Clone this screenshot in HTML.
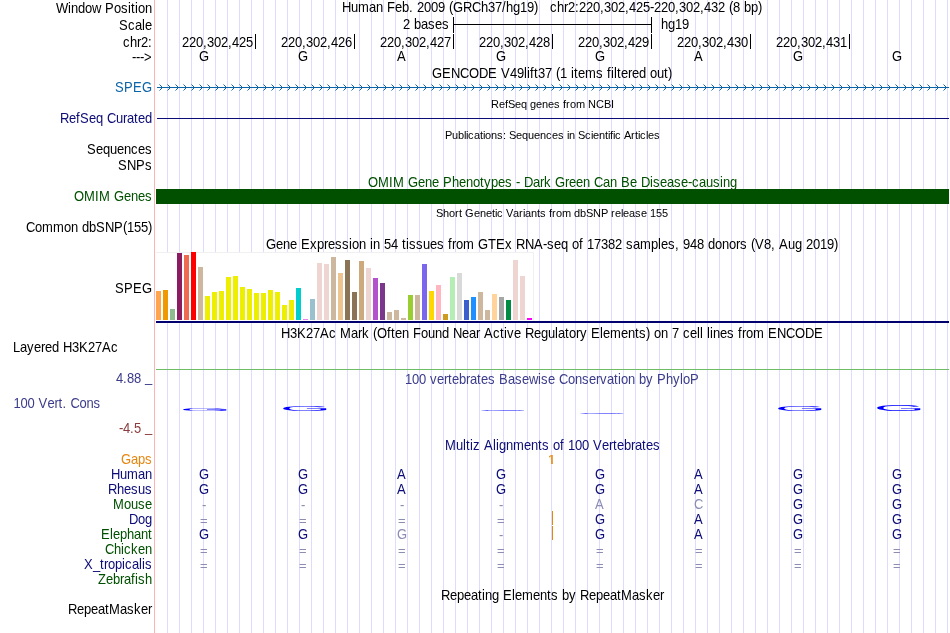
<!DOCTYPE html>
<html lang="en"><head><meta charset="utf-8"><title>UCSC Genome Browser - hg19 chr2:220,302,425-220,302,432</title>
<style>
html,body{margin:0;padding:0;background:#fff;}
body{width:950px;height:633px;overflow:hidden;}
svg{display:block;will-change:transform;font-family:"Liberation Sans",sans-serif;font-size:13.8px;}
svg text{white-space:pre;}
svg text.s{font-size:11.1px;}
svg rect{shape-rendering:crispEdges;}
</style></head><body>
<svg width="950" height="633" viewBox="0 0 950 633">
<g fill="#dcdcff">
<rect x="167" y="0" width="1" height="633"/>
<rect x="179" y="0" width="1" height="633"/>
<rect x="191" y="0" width="1" height="633"/>
<rect x="203" y="0" width="1" height="633"/>
<rect x="215" y="0" width="1" height="633"/>
<rect x="227" y="0" width="1" height="633"/>
<rect x="239" y="0" width="1" height="633"/>
<rect x="251" y="0" width="1" height="633"/>
<rect x="263" y="0" width="1" height="633"/>
<rect x="275" y="0" width="1" height="633"/>
<rect x="287" y="0" width="1" height="633"/>
<rect x="299" y="0" width="1" height="633"/>
<rect x="311" y="0" width="1" height="633"/>
<rect x="323" y="0" width="1" height="633"/>
<rect x="335" y="0" width="1" height="633"/>
<rect x="347" y="0" width="1" height="633"/>
<rect x="359" y="0" width="1" height="633"/>
<rect x="371" y="0" width="1" height="633"/>
<rect x="383" y="0" width="1" height="633"/>
<rect x="395" y="0" width="1" height="633"/>
<rect x="407" y="0" width="1" height="633"/>
<rect x="419" y="0" width="1" height="633"/>
<rect x="431" y="0" width="1" height="633"/>
<rect x="443" y="0" width="1" height="633"/>
<rect x="455" y="0" width="1" height="633"/>
<rect x="467" y="0" width="1" height="633"/>
<rect x="479" y="0" width="1" height="633"/>
<rect x="491" y="0" width="1" height="633"/>
<rect x="503" y="0" width="1" height="633"/>
<rect x="515" y="0" width="1" height="633"/>
<rect x="527" y="0" width="1" height="633"/>
<rect x="539" y="0" width="1" height="633"/>
<rect x="551" y="0" width="1" height="633"/>
<rect x="563" y="0" width="1" height="633"/>
<rect x="575" y="0" width="1" height="633"/>
<rect x="587" y="0" width="1" height="633"/>
<rect x="599" y="0" width="1" height="633"/>
<rect x="611" y="0" width="1" height="633"/>
<rect x="623" y="0" width="1" height="633"/>
<rect x="635" y="0" width="1" height="633"/>
<rect x="647" y="0" width="1" height="633"/>
<rect x="659" y="0" width="1" height="633"/>
<rect x="671" y="0" width="1" height="633"/>
<rect x="683" y="0" width="1" height="633"/>
<rect x="695" y="0" width="1" height="633"/>
<rect x="707" y="0" width="1" height="633"/>
<rect x="719" y="0" width="1" height="633"/>
<rect x="731" y="0" width="1" height="633"/>
<rect x="743" y="0" width="1" height="633"/>
<rect x="755" y="0" width="1" height="633"/>
<rect x="767" y="0" width="1" height="633"/>
<rect x="779" y="0" width="1" height="633"/>
<rect x="791" y="0" width="1" height="633"/>
<rect x="803" y="0" width="1" height="633"/>
<rect x="815" y="0" width="1" height="633"/>
<rect x="827" y="0" width="1" height="633"/>
<rect x="839" y="0" width="1" height="633"/>
<rect x="851" y="0" width="1" height="633"/>
<rect x="863" y="0" width="1" height="633"/>
<rect x="875" y="0" width="1" height="633"/>
<rect x="887" y="0" width="1" height="633"/>
<rect x="899" y="0" width="1" height="633"/>
<rect x="911" y="0" width="1" height="633"/>
<rect x="923" y="0" width="1" height="633"/>
<rect x="935" y="0" width="1" height="633"/>
<rect x="947" y="0" width="1" height="633"/>
</g>
<rect x="154" y="0" width="1" height="633" fill="#ffb4b4"/>
<text transform="translate(0 13) scale(0.94203 1)" x="59.45 72.18 75.37 82.8 90.23 97.66 107.22 111.46 121.02 128.45 135.88 139.06 143.31 146.49 153.92" y="0" fill="#000">Window Position</text>
<text transform="translate(0 12) scale(0.94203 1)" x="363.05 372.6 380.03 391.71 399.14 406.57 410.82 419.31 426.74 434.17 438.42 442.66 450.09 457.52 464.95 472.38 476.63 480.88 491.49 501.05 510.6 518.03 525.46 532.89 537.14 544.57 552 559.43 566.86 571.11 575.35 579.6 583.85 591.28 598.71 602.95 610.38 614.63 622.06 629.49 636.92 641.17 648.6 656.03 663.46 667.71 675.14 682.57 690 694.25 701.68 709.11 716.54 720.78 728.22 735.65 743.08 747.32 754.75 762.18 769.62 773.86 778.11 785.54 789.78 797.22 804.65" y="0" xml:space="preserve" fill="#000">Human Feb. 2009 (GRCh37/hg19)   chr2:220,302,425-220,302,432 (8 bp)</text>
<text transform="translate(0 30) scale(0.94203 1)" x="126.32 135.88 143.31 150.74 153.92" y="0" fill="#000">Scale</text>
<text transform="translate(0 29) scale(0.94203 1)" x="427.8 435.23 439.48 446.91 454.34 461.77 469.2" y="0" fill="#000">2 bases</text>
<rect x="453" y="24" width="199" height="1" fill="#000"/>
<rect x="453" y="17" width="1" height="16" fill="#000"/>
<rect x="651" y="17" width="1" height="16" fill="#000"/>
<text transform="translate(0 29) scale(0.94203 1)" x="701.68 709.11 716.54 723.97" y="0" fill="#000">hg19</text>
<text transform="translate(0 47) scale(0.94203 1)" x="130.57 138 145.43 149.68 157.11" y="0" fill="#000">chr2:</text>
<rect x="255" y="34" width="1" height="15" fill="#000"/>
<text transform="translate(0 47) scale(0.94203 1)" x="193.2 200.63 208.06 215.49 219.74 227.17 234.6 242.03 246.28 253.71 261.14" y="0" fill="#000">220,302,425</text>
<rect x="354" y="34" width="1" height="15" fill="#000"/>
<text transform="translate(0 47) scale(0.94203 1)" x="298.29 305.72 313.15 320.58 324.83 332.26 339.69 347.12 351.37 358.8 366.23" y="0" fill="#000">220,302,426</text>
<rect x="453" y="34" width="1" height="15" fill="#000"/>
<text transform="translate(0 47) scale(0.94203 1)" x="403.38 410.82 418.25 425.68 429.92 437.35 444.78 452.22 456.46 463.89 471.32" y="0" fill="#000">220,302,427</text>
<rect x="552" y="34" width="1" height="15" fill="#000"/>
<text transform="translate(0 47) scale(0.94203 1)" x="508.48 515.91 523.34 530.77 535.02 542.45 549.88 557.31 561.55 568.98 576.42" y="0" fill="#000">220,302,428</text>
<rect x="651" y="34" width="1" height="15" fill="#000"/>
<text transform="translate(0 47) scale(0.94203 1)" x="613.57 621 628.43 635.86 640.11 647.54 654.97 662.4 666.65 674.08 681.51" y="0" fill="#000">220,302,429</text>
<rect x="750" y="34" width="1" height="15" fill="#000"/>
<text transform="translate(0 47) scale(0.94203 1)" x="718.66 726.09 733.52 740.95 745.2 752.63 760.06 767.49 771.74 779.17 786.6" y="0" fill="#000">220,302,430</text>
<rect x="849" y="34" width="1" height="15" fill="#000"/>
<text transform="translate(0 47) scale(0.94203 1)" x="823.75 831.18 838.62 846.05 850.29 857.72 865.15 872.58 876.83 884.26 891.69" y="0" fill="#000">220,302,431</text>
<text transform="translate(0 62) scale(0.94203 1)" x="140.12 144.37 148.62 152.86" y="0" fill="#000">---&gt;</text>
<text transform="translate(0 61) scale(0.94203 1)" x="211.25" y="0" fill="#000">G</text>
<text transform="translate(0 61) scale(0.94203 1)" x="316.34" y="0" fill="#000">G</text>
<text transform="translate(0 61) scale(0.94203 1)" x="421.43" y="0" fill="#000">A</text>
<text transform="translate(0 61) scale(0.94203 1)" x="526.52" y="0" fill="#000">G</text>
<text transform="translate(0 61) scale(0.94203 1)" x="631.62" y="0" fill="#000">G</text>
<text transform="translate(0 61) scale(0.94203 1)" x="736.71" y="0" fill="#000">A</text>
<text transform="translate(0 61) scale(0.94203 1)" x="841.8" y="0" fill="#000">G</text>
<text transform="translate(0 61) scale(0.94203 1)" x="946.89" y="0" fill="#000">G</text>
<text transform="translate(0 78) scale(0.94203 1)" x="458.58 469.2 478.75 488.31 497.86 508.48 518.03 527.58 531.83 541.38 548.82 556.25 559.43 562.62 566.86 571.11 578.54 585.97 590.22 594.46 601.89 606.14 609.32 613.57 621 632.68 640.11 644.35 648.6 651.78 654.97 659.22 666.65 670.89 678.32 685.75 690 697.43 704.86 709.11" y="0" fill="#000">GENCODE V49lift37 (1 items filtered out)</text>
<text transform="translate(0 92) scale(0.94203 1)" x="122.08 131.63 141.18 150.74" y="0" fill="#0c64a8">SPEG</text>
<rect x="157" y="87" width="792" height="1" fill="#0c64a8"/>
<g stroke="#0c64a8" stroke-width="1" fill="none">
<path d="M159.5 84.5 L162.5 87.5 L159.5 90.5"/>
<path d="M167.5 84.5 L170.5 87.5 L167.5 90.5"/>
<path d="M175.5 84.5 L178.5 87.5 L175.5 90.5"/>
<path d="M183.5 84.5 L186.5 87.5 L183.5 90.5"/>
<path d="M191.5 84.5 L194.5 87.5 L191.5 90.5"/>
<path d="M199.5 84.5 L202.5 87.5 L199.5 90.5"/>
<path d="M207.5 84.5 L210.5 87.5 L207.5 90.5"/>
<path d="M215.5 84.5 L218.5 87.5 L215.5 90.5"/>
<path d="M223.5 84.5 L226.5 87.5 L223.5 90.5"/>
<path d="M231.5 84.5 L234.5 87.5 L231.5 90.5"/>
<path d="M239.5 84.5 L242.5 87.5 L239.5 90.5"/>
<path d="M247.5 84.5 L250.5 87.5 L247.5 90.5"/>
<path d="M255.5 84.5 L258.5 87.5 L255.5 90.5"/>
<path d="M263.5 84.5 L266.5 87.5 L263.5 90.5"/>
<path d="M271.5 84.5 L274.5 87.5 L271.5 90.5"/>
<path d="M279.5 84.5 L282.5 87.5 L279.5 90.5"/>
<path d="M287.5 84.5 L290.5 87.5 L287.5 90.5"/>
<path d="M295.5 84.5 L298.5 87.5 L295.5 90.5"/>
<path d="M303.5 84.5 L306.5 87.5 L303.5 90.5"/>
<path d="M311.5 84.5 L314.5 87.5 L311.5 90.5"/>
<path d="M319.5 84.5 L322.5 87.5 L319.5 90.5"/>
<path d="M327.5 84.5 L330.5 87.5 L327.5 90.5"/>
<path d="M335.5 84.5 L338.5 87.5 L335.5 90.5"/>
<path d="M343.5 84.5 L346.5 87.5 L343.5 90.5"/>
<path d="M351.5 84.5 L354.5 87.5 L351.5 90.5"/>
<path d="M359.5 84.5 L362.5 87.5 L359.5 90.5"/>
<path d="M367.5 84.5 L370.5 87.5 L367.5 90.5"/>
<path d="M375.5 84.5 L378.5 87.5 L375.5 90.5"/>
<path d="M383.5 84.5 L386.5 87.5 L383.5 90.5"/>
<path d="M391.5 84.5 L394.5 87.5 L391.5 90.5"/>
<path d="M399.5 84.5 L402.5 87.5 L399.5 90.5"/>
<path d="M407.5 84.5 L410.5 87.5 L407.5 90.5"/>
<path d="M415.5 84.5 L418.5 87.5 L415.5 90.5"/>
<path d="M423.5 84.5 L426.5 87.5 L423.5 90.5"/>
<path d="M431.5 84.5 L434.5 87.5 L431.5 90.5"/>
<path d="M439.5 84.5 L442.5 87.5 L439.5 90.5"/>
<path d="M447.5 84.5 L450.5 87.5 L447.5 90.5"/>
<path d="M455.5 84.5 L458.5 87.5 L455.5 90.5"/>
<path d="M463.5 84.5 L466.5 87.5 L463.5 90.5"/>
<path d="M471.5 84.5 L474.5 87.5 L471.5 90.5"/>
<path d="M479.5 84.5 L482.5 87.5 L479.5 90.5"/>
<path d="M487.5 84.5 L490.5 87.5 L487.5 90.5"/>
<path d="M495.5 84.5 L498.5 87.5 L495.5 90.5"/>
<path d="M503.5 84.5 L506.5 87.5 L503.5 90.5"/>
<path d="M511.5 84.5 L514.5 87.5 L511.5 90.5"/>
<path d="M519.5 84.5 L522.5 87.5 L519.5 90.5"/>
<path d="M527.5 84.5 L530.5 87.5 L527.5 90.5"/>
<path d="M535.5 84.5 L538.5 87.5 L535.5 90.5"/>
<path d="M543.5 84.5 L546.5 87.5 L543.5 90.5"/>
<path d="M551.5 84.5 L554.5 87.5 L551.5 90.5"/>
<path d="M559.5 84.5 L562.5 87.5 L559.5 90.5"/>
<path d="M567.5 84.5 L570.5 87.5 L567.5 90.5"/>
<path d="M575.5 84.5 L578.5 87.5 L575.5 90.5"/>
<path d="M583.5 84.5 L586.5 87.5 L583.5 90.5"/>
<path d="M591.5 84.5 L594.5 87.5 L591.5 90.5"/>
<path d="M599.5 84.5 L602.5 87.5 L599.5 90.5"/>
<path d="M607.5 84.5 L610.5 87.5 L607.5 90.5"/>
<path d="M615.5 84.5 L618.5 87.5 L615.5 90.5"/>
<path d="M623.5 84.5 L626.5 87.5 L623.5 90.5"/>
<path d="M631.5 84.5 L634.5 87.5 L631.5 90.5"/>
<path d="M639.5 84.5 L642.5 87.5 L639.5 90.5"/>
<path d="M647.5 84.5 L650.5 87.5 L647.5 90.5"/>
<path d="M655.5 84.5 L658.5 87.5 L655.5 90.5"/>
<path d="M663.5 84.5 L666.5 87.5 L663.5 90.5"/>
<path d="M671.5 84.5 L674.5 87.5 L671.5 90.5"/>
<path d="M679.5 84.5 L682.5 87.5 L679.5 90.5"/>
<path d="M687.5 84.5 L690.5 87.5 L687.5 90.5"/>
<path d="M695.5 84.5 L698.5 87.5 L695.5 90.5"/>
<path d="M703.5 84.5 L706.5 87.5 L703.5 90.5"/>
<path d="M711.5 84.5 L714.5 87.5 L711.5 90.5"/>
<path d="M719.5 84.5 L722.5 87.5 L719.5 90.5"/>
<path d="M727.5 84.5 L730.5 87.5 L727.5 90.5"/>
<path d="M735.5 84.5 L738.5 87.5 L735.5 90.5"/>
<path d="M743.5 84.5 L746.5 87.5 L743.5 90.5"/>
<path d="M751.5 84.5 L754.5 87.5 L751.5 90.5"/>
<path d="M759.5 84.5 L762.5 87.5 L759.5 90.5"/>
<path d="M767.5 84.5 L770.5 87.5 L767.5 90.5"/>
<path d="M775.5 84.5 L778.5 87.5 L775.5 90.5"/>
<path d="M783.5 84.5 L786.5 87.5 L783.5 90.5"/>
<path d="M791.5 84.5 L794.5 87.5 L791.5 90.5"/>
<path d="M799.5 84.5 L802.5 87.5 L799.5 90.5"/>
<path d="M807.5 84.5 L810.5 87.5 L807.5 90.5"/>
<path d="M815.5 84.5 L818.5 87.5 L815.5 90.5"/>
<path d="M823.5 84.5 L826.5 87.5 L823.5 90.5"/>
<path d="M831.5 84.5 L834.5 87.5 L831.5 90.5"/>
<path d="M839.5 84.5 L842.5 87.5 L839.5 90.5"/>
<path d="M847.5 84.5 L850.5 87.5 L847.5 90.5"/>
<path d="M855.5 84.5 L858.5 87.5 L855.5 90.5"/>
<path d="M863.5 84.5 L866.5 87.5 L863.5 90.5"/>
<path d="M871.5 84.5 L874.5 87.5 L871.5 90.5"/>
<path d="M879.5 84.5 L882.5 87.5 L879.5 90.5"/>
<path d="M887.5 84.5 L890.5 87.5 L887.5 90.5"/>
<path d="M895.5 84.5 L898.5 87.5 L895.5 90.5"/>
<path d="M903.5 84.5 L906.5 87.5 L903.5 90.5"/>
<path d="M911.5 84.5 L914.5 87.5 L911.5 90.5"/>
<path d="M919.5 84.5 L922.5 87.5 L919.5 90.5"/>
<path d="M927.5 84.5 L930.5 87.5 L927.5 90.5"/>
<path d="M935.5 84.5 L938.5 87.5 L935.5 90.5"/>
<path d="M943.5 84.5 L946.5 87.5 L943.5 90.5"/>
</g>
<text transform="translate(0 108) scale(0.99099 1)" x="495.46 503.54 509.59 512.62 519.68 525.74 531.79 534.82 540.87 546.93 552.98 559.04 565.09 568.12 571.15 575.18 581.24 590.32 593.35 601.42 609.49 616.55" y="0" class="s" fill="#000">RefSeq genes from NCBI</text>
<text transform="translate(0 123) scale(0.94203 1)" x="63.69 73.25 80.68 84.92 94.48 101.91 109.34 113.58 123.14 130.57 134.82 142.25 146.49 153.92" y="0" fill="#0c0c78">RefSeq Curated</text>
<rect x="157" y="118" width="792" height="1" fill="#0c0c78"/>
<text transform="translate(0 139) scale(0.99099 1)" x="449.05 456.11 462.16 468.22 470.24 472.25 478.31 484.36 487.39 489.41 495.46 501.52 507.57 510.6 513.63 520.69 526.75 532.8 538.85 544.91 550.96 557.02 563.07 569.13 572.15 574.17 580.23 583.25 590.32 596.37 598.39 604.45 610.5 613.53 615.55 618.57 620.59 626.65 629.67 636.74 640.77 643.8 645.82 651.87 653.89 659.95" y="0" class="s" fill="#000">Publications: Sequences in Scientific Articles</text>
<text transform="translate(0 154) scale(0.94203 1)" x="92.35 101.91 109.34 116.77 124.2 131.63 139.06 146.49 153.92" y="0" fill="#000">Sequences</text>
<text transform="translate(0 170) scale(0.94203 1)" x="125.26 134.82 144.37 153.92" y="0" fill="#000">SNPs</text>
<text transform="translate(0 187) scale(0.94203 1)" x="390.65 401.26 412.94 417.18 428.86 433.11 443.72 451.15 458.58 466.02 470.26 479.82 487.25 494.68 502.11 509.54 513.78 521.22 528.65 536.08 543.51 547.75 552 556.25 565.8 573.23 577.48 584.91 589.15 599.77 604.02 611.45 618.88 626.31 630.55 640.11 647.54 654.97 659.22 668.77 676.2 680.45 690 693.18 700.62 708.05 715.48 722.91 730.34 734.58 742.02 749.45 756.88 764.31 767.49 774.92" y="0" fill="#005000">OMIM Gene Phenotypes - Dark Green Can Be Disease-causing</text>
<text transform="translate(0 201) scale(0.94203 1)" x="78.55 89.17 100.85 105.09 116.77 121.02 131.63 139.06 146.49 153.92" y="0" fill="#005000">OMIM Genes</text>
<rect x="156" y="189" width="793" height="15" fill="#005000"/>
<text transform="translate(0 217) scale(0.99099 1)" x="439.96 447.03 453.08 459.14 463.17 466.2 469.23 478.31 484.36 490.42 496.47 499.5 501.52 507.57 510.6 517.66 523.72 527.75 529.77 535.83 541.88 544.91 550.96 553.99 557.02 561.05 567.11 576.19 579.22 585.27 591.33 598.39 606.46 613.53 616.55 620.59 626.65 628.66 634.72 640.77 646.83 652.88 655.91 661.96 668.02" y="0" class="s" fill="#000">Short Genetic Variants from dbSNP release 155</text>
<text transform="translate(0 232) scale(0.94203 1)" x="27.6 37.15 44.58 56.26 67.94 75.37 82.8 87.05 94.48 101.91 111.46 121.02 130.57 134.82 142.25 149.68 157.11" y="0" fill="#000">Common dbSNP(155)</text>
<text transform="translate(0 249) scale(0.94203 1)" x="282.37 292.98 300.42 307.85 315.28 319.52 329.08 336.51 343.94 348.18 355.62 363.05 370.48 373.66 381.09 388.52 392.77 395.95 403.38 407.63 415.06 422.49 426.74 430.98 434.17 441.6 449.03 456.46 463.89 471.32 475.57 479.82 484.06 491.49 503.17 507.42 518.03 526.52 536.08 543.51 547.75 557.31 566.86 576.42 580.66 588.09 595.52 602.95 607.2 614.63 618.88 623.12 630.55 637.98 645.42 652.85 660.28 664.52 671.95 679.38 691.06 698.49 701.68 709.11 716.54 720.78 725.03 732.46 739.89 747.32 751.57 759 766.43 773.86 781.29 785.54 792.97 797.22 801.46 811.02 818.45 822.69 826.94 836.49 843.92 851.35 855.6 863.03 870.46 877.89 885.32" y="0" fill="#000">Gene Expression in 54 tissues from GTEx RNA-seq of 17382 samples, 948 donors (V8, Aug 2019)</text>
<text transform="translate(0 293) scale(0.94203 1)" x="122.08 131.63 141.18 150.74" y="0" fill="#000">SPEG</text>
<rect x="156" y="252" width="378" height="69" fill="#fff"/>
<rect x="156" y="252" width="378" height="1" fill="#f0f0f0"/>
<rect x="533" y="252" width="1" height="69" fill="#f0f0f0"/>
<rect x="156" y="291" width="5" height="29" fill="#ffa54f"/>
<rect x="163" y="290" width="5" height="30" fill="#ee9a00"/>
<rect x="170" y="309" width="5" height="11" fill="#8fbc8f"/>
<rect x="177" y="253" width="5" height="67" fill="#8b1c62"/>
<rect x="184" y="255" width="5" height="65" fill="#ee6a50"/>
<rect x="191" y="252" width="5" height="68" fill="#ff0000"/>
<rect x="198" y="267" width="5" height="53" fill="#cdb79e"/>
<rect x="205" y="296" width="5" height="24" fill="#eeee00"/>
<rect x="212" y="292" width="5" height="28" fill="#eeee00"/>
<rect x="219" y="291" width="5" height="29" fill="#eeee00"/>
<rect x="226" y="277" width="5" height="43" fill="#eeee00"/>
<rect x="233" y="276" width="5" height="44" fill="#eeee00"/>
<rect x="240" y="287" width="5" height="33" fill="#eeee00"/>
<rect x="247" y="289" width="5" height="31" fill="#eeee00"/>
<rect x="254" y="293" width="5" height="27" fill="#eeee00"/>
<rect x="261" y="293" width="5" height="27" fill="#eeee00"/>
<rect x="268" y="290" width="5" height="30" fill="#eeee00"/>
<rect x="275" y="292" width="5" height="28" fill="#eeee00"/>
<rect x="282" y="305" width="5" height="15" fill="#eeee00"/>
<rect x="289" y="300" width="5" height="20" fill="#eeee00"/>
<rect x="296" y="288" width="5" height="32" fill="#00cdcd"/>
<rect x="303" y="319" width="5" height="1" fill="#ee82ee"/>
<rect x="310" y="299" width="5" height="21" fill="#9ac0cd"/>
<rect x="317" y="263" width="5" height="57" fill="#eed5d2"/>
<rect x="324" y="264" width="5" height="56" fill="#eed5d2"/>
<rect x="331" y="257" width="5" height="63" fill="#cdb79e"/>
<rect x="338" y="273" width="5" height="47" fill="#eec591"/>
<rect x="345" y="260" width="5" height="60" fill="#8b7355"/>
<rect x="352" y="292" width="5" height="28" fill="#8b7355"/>
<rect x="359" y="261" width="5" height="59" fill="#cdaa7d"/>
<rect x="366" y="268" width="5" height="52" fill="#eed5d2"/>
<rect x="373" y="278" width="5" height="42" fill="#b452cd"/>
<rect x="380" y="283" width="5" height="37" fill="#7a378b"/>
<rect x="387" y="312" width="5" height="8" fill="#cdb79e"/>
<rect x="394" y="310" width="5" height="10" fill="#cdb79e"/>
<rect x="401" y="318" width="5" height="2" fill="#cdb79e"/>
<rect x="408" y="295" width="5" height="25" fill="#9acd32"/>
<rect x="415" y="295" width="5" height="25" fill="#cdb79e"/>
<rect x="422" y="264" width="5" height="56" fill="#7a67ee"/>
<rect x="429" y="291" width="5" height="29" fill="#ffd700"/>
<rect x="436" y="285" width="5" height="35" fill="#ffb6c1"/>
<rect x="443" y="314" width="5" height="6" fill="#cd9b1d"/>
<rect x="450" y="277" width="5" height="43" fill="#b4eeb4"/>
<rect x="457" y="273" width="5" height="47" fill="#d9d9d9"/>
<rect x="464" y="300" width="5" height="20" fill="#3a5fcd"/>
<rect x="471" y="297" width="5" height="23" fill="#1e90ff"/>
<rect x="478" y="292" width="5" height="28" fill="#cdb79e"/>
<rect x="485" y="310" width="5" height="10" fill="#cdb79e"/>
<rect x="492" y="294" width="5" height="26" fill="#ffd39b"/>
<rect x="499" y="297" width="5" height="23" fill="#a6a6a6"/>
<rect x="506" y="300" width="5" height="20" fill="#008b45"/>
<rect x="513" y="260" width="5" height="60" fill="#eed5d2"/>
<rect x="520" y="276" width="5" height="44" fill="#eed5d2"/>
<rect x="527" y="318" width="5" height="2" fill="#ff00ff"/>
<rect x="156" y="321" width="793" height="2" fill="#00006e"/>
<text transform="translate(0 338) scale(0.94203 1)" x="298.29 307.85 315.28 324.83 332.26 339.69 349.25 356.68 360.92 372.6 380.03 384.28 391.71 395.95 400.2 410.82 415.06 419.31 426.74 434.17 438.42 446.91 454.34 461.77 469.2 476.63 480.88 490.43 497.86 505.29 509.54 513.78 523.34 530.77 535.02 538.2 545.63 553.06 557.31 566.86 574.29 581.72 589.15 592.34 599.77 604.02 611.45 615.69 623.12 627.37 636.92 640.11 647.54 659.22 666.65 674.08 678.32 685.75 690 694.25 701.68 709.11 713.35 720.78 725.03 732.46 739.89 743.08 746.26 750.51 753.69 756.88 764.31 771.74 779.17 783.42 787.66 791.91 799.34 811.02 815.26 824.82 834.37 843.92 854.54 864.09" y="0" fill="#000">H3K27Ac Mark (Often Found Near Active Regulatory Elements) on 7 cell lines from ENCODE</text>
<text transform="translate(0 352) scale(0.94203 1)" x="13.8 21.23 28.66 36.09 43.52 47.77 55.2 62.63 66.88 76.43 83.86 93.42 100.85 108.28 117.83" y="0" fill="#000">Layered H3K27Ac</text>
<rect x="156" y="369" width="793" height="1" fill="#6ebd66"/>
<text transform="translate(0 384) scale(0.94203 1)" x="429.92 437.35 444.78 452.22 456.46 463.89 471.32 475.57 479.82 487.25 494.68 498.92 506.35 510.6 518.03 525.46 529.71 539.26 546.69 554.12 561.55 571.11 574.29 581.72 589.15 593.4 602.95 610.38 617.82 625.25 632.68 636.92 644.35 651.78 656.03 659.22 666.65 674.08 678.32 685.75 693.18 697.43 706.98 714.42 721.85 725.03 732.46" y="0" fill="#3c3c8c">100 vertebrates Basewise Conservation by PhyloP</text>
<text transform="translate(0 383) scale(0.94203 1)" x="123.14 130.57 134.82 142.25 149.68" y="0" fill="#3c3c8c">4.88 </text>
<text transform="translate(0 382) scale(0.94203 1)" x="153.92" y="0" fill="#3c3c8c">_</text>
<text transform="translate(0 408) scale(0.94203 1)" x="14.33 21.76 29.19 36.62 40.87 50.42 57.85 62.1 66.35 70.59 74.84 84.39 91.82 99.25" y="0" fill="#3c3c8c">100 Vert. Cons</text>
<text transform="translate(0 433) scale(0.94203 1)" x="126.32 130.57 138 142.25 149.68" y="0" fill="#8c3c3c">-4.5 </text>
<text transform="translate(0 432) scale(0.94203 1)" x="153.92" y="0" fill="#8c3c3c">_</text>
<text transform="translate(179.67 410.96) scale(0.6618 0.0438)" font-size="100" fill="#0000ff">G</text>
<text transform="translate(279.67 410.93) scale(0.6618 0.0706)" font-size="100" fill="#0000ff">G</text>
<text transform="translate(478.10 410.99) scale(0.6556 0.0127)" font-size="100" fill="#0000ff">G</text>
<text transform="translate(576.67 414.18) scale(0.6618 0.0240)" font-size="100" fill="#0000ff">G</text>
<text transform="translate(774.67 410.93) scale(0.6618 0.0749)" font-size="100" fill="#0000ff">G</text>
<text transform="translate(873.67 410.91) scale(0.6618 0.0876)" font-size="100" fill="#0000ff">G</text>
<text transform="translate(0 450) scale(0.94203 1)" x="472.38 484.06 491.49 494.68 498.92 502.11 509.54 513.78 523.34 526.52 529.71 537.14 544.57 556.25 563.68 571.11 575.35 582.78 587.03 594.46 598.71 602.95 610.38 617.82 625.25 629.49 639.05 646.48 650.72 654.97 662.4 669.83 674.08 681.51 685.75 693.18" y="0" fill="#0c0c78">Multiz Alignments of 100 Vertebrates</text>
<text transform="translate(0 464) scale(0.94203 1)" x="128.45 139.06 146.49 153.92" y="0" fill="#e6860f">Gaps</text>
<text transform="translate(0 479) scale(0.94203 1)" x="117.83 127.38 134.82 146.49 153.92" y="0" fill="#0c0c78">Human</text>
<text transform="translate(0 494) scale(0.94203 1)" x="114.65 124.2 131.63 139.06 146.49 153.92" y="0" fill="#0c0c78">Rhesus</text>
<text transform="translate(0 509) scale(0.94203 1)" x="119.95 131.63 139.06 146.49 153.92" y="0" fill="#005000">Mouse</text>
<text transform="translate(0 524) scale(0.94203 1)" x="136.94 146.49 153.92" y="0" fill="#0c0c78">Dog</text>
<text transform="translate(0 539) scale(0.94203 1)" x="107.22 116.77 119.95 127.38 134.82 142.25 149.68 157.11" y="0" fill="#005000">Elephant</text>
<text transform="translate(0 554) scale(0.94203 1)" x="111.46 121.02 128.45 131.63 139.06 146.49 153.92" y="0" fill="#005000">Chicken</text>
<text transform="translate(0 569) scale(0.94203 1)" x="89.17 98.72 106.15 110.4 114.65 122.08 129.51 132.69 140.12 147.55 150.74 153.92" y="0" fill="#0c0c78">X_tropicalis</text>
<text transform="translate(0 584) scale(0.94203 1)" x="104.03 112.52 119.95 127.38 131.63 139.06 143.31 146.49 153.92" y="0" fill="#005000">Zebrafish</text>
<text transform="translate(0 479) scale(0.94203 1)" x="211.25" y="0" fill="#0c0c78">G</text>
<text transform="translate(0 479) scale(0.94203 1)" x="316.34" y="0" fill="#0c0c78">G</text>
<text transform="translate(0 479) scale(0.94203 1)" x="421.43" y="0" fill="#0c0c78">A</text>
<text transform="translate(0 479) scale(0.94203 1)" x="526.52" y="0" fill="#0c0c78">G</text>
<text transform="translate(0 479) scale(0.94203 1)" x="631.62" y="0" fill="#0c0c78">G</text>
<text transform="translate(0 479) scale(0.94203 1)" x="736.71" y="0" fill="#0c0c78">A</text>
<text transform="translate(0 479) scale(0.94203 1)" x="841.8" y="0" fill="#0c0c78">G</text>
<text transform="translate(0 479) scale(0.94203 1)" x="946.89" y="0" fill="#0c0c78">G</text>
<text transform="translate(0 494) scale(0.94203 1)" x="211.25" y="0" fill="#0c0c78">G</text>
<text transform="translate(0 494) scale(0.94203 1)" x="316.34" y="0" fill="#0c0c78">G</text>
<text transform="translate(0 494) scale(0.94203 1)" x="421.43" y="0" fill="#0c0c78">A</text>
<text transform="translate(0 494) scale(0.94203 1)" x="526.52" y="0" fill="#0c0c78">G</text>
<text transform="translate(0 494) scale(0.94203 1)" x="631.62" y="0" fill="#0c0c78">G</text>
<text transform="translate(0 494) scale(0.94203 1)" x="736.71" y="0" fill="#0c0c78">A</text>
<text transform="translate(0 494) scale(0.94203 1)" x="841.8" y="0" fill="#0c0c78">G</text>
<text transform="translate(0 494) scale(0.94203 1)" x="946.89" y="0" fill="#0c0c78">G</text>
<text transform="translate(0 510) scale(0.94203 1)" x="214.43" y="0" fill="#8c8cb4">-</text>
<text transform="translate(0 510) scale(0.94203 1)" x="319.52" y="0" fill="#8c8cb4">-</text>
<text transform="translate(0 510) scale(0.94203 1)" x="424.62" y="0" fill="#8c8cb4">-</text>
<text transform="translate(0 510) scale(0.94203 1)" x="529.71" y="0" fill="#8c8cb4">-</text>
<text transform="translate(0 509) scale(0.94203 1)" x="631.62" y="0" fill="#8c8cb4">A</text>
<text transform="translate(0 509) scale(0.94203 1)" x="736.71" y="0" fill="#8c8cb4">C</text>
<text transform="translate(0 509) scale(0.94203 1)" x="841.8" y="0" fill="#0c0c78">G</text>
<text transform="translate(0 509) scale(0.94203 1)" x="946.89" y="0" fill="#0c0c78">G</text>
<text transform="translate(0 524.6) scale(0.94203 0.75)" x="212.31" y="0" fill="#8c8cb4">=</text>
<text transform="translate(0 524.6) scale(0.94203 0.75)" x="317.4" y="0" fill="#8c8cb4">=</text>
<text transform="translate(0 524.6) scale(0.94203 0.75)" x="422.49" y="0" fill="#8c8cb4">=</text>
<text transform="translate(0 524.6) scale(0.94203 0.75)" x="527.58" y="0" fill="#8c8cb4">=</text>
<text transform="translate(0 524) scale(0.94203 1)" x="631.62" y="0" fill="#0c0c78">G</text>
<text transform="translate(0 524) scale(0.94203 1)" x="736.71" y="0" fill="#0c0c78">A</text>
<text transform="translate(0 524) scale(0.94203 1)" x="841.8" y="0" fill="#0c0c78">G</text>
<text transform="translate(0 524) scale(0.94203 1)" x="946.89" y="0" fill="#0c0c78">G</text>
<text transform="translate(0 539) scale(0.94203 1)" x="211.25" y="0" fill="#0c0c78">G</text>
<text transform="translate(0 539) scale(0.94203 1)" x="316.34" y="0" fill="#0c0c78">G</text>
<text transform="translate(0 539) scale(0.94203 1)" x="421.43" y="0" fill="#8c8cb4">G</text>
<text transform="translate(0 540) scale(0.94203 1)" x="529.71" y="0" fill="#8c8cb4">-</text>
<text transform="translate(0 539) scale(0.94203 1)" x="631.62" y="0" fill="#0c0c78">G</text>
<text transform="translate(0 539) scale(0.94203 1)" x="736.71" y="0" fill="#0c0c78">A</text>
<text transform="translate(0 539) scale(0.94203 1)" x="841.8" y="0" fill="#0c0c78">G</text>
<text transform="translate(0 539) scale(0.94203 1)" x="946.89" y="0" fill="#0c0c78">G</text>
<text transform="translate(0 554.6) scale(0.94203 0.75)" x="212.31" y="0" fill="#8c8cb4">=</text>
<text transform="translate(0 554.6) scale(0.94203 0.75)" x="317.4" y="0" fill="#8c8cb4">=</text>
<text transform="translate(0 554.6) scale(0.94203 0.75)" x="422.49" y="0" fill="#8c8cb4">=</text>
<text transform="translate(0 554.6) scale(0.94203 0.75)" x="527.58" y="0" fill="#8c8cb4">=</text>
<text transform="translate(0 554.6) scale(0.94203 0.75)" x="632.68" y="0" fill="#8c8cb4">=</text>
<text transform="translate(0 554.6) scale(0.94203 0.75)" x="737.77" y="0" fill="#8c8cb4">=</text>
<text transform="translate(0 554.6) scale(0.94203 0.75)" x="842.86" y="0" fill="#8c8cb4">=</text>
<text transform="translate(0 554.6) scale(0.94203 0.75)" x="947.95" y="0" fill="#8c8cb4">=</text>
<text transform="translate(0 569.6) scale(0.94203 0.75)" x="212.31" y="0" fill="#8c8cb4">=</text>
<text transform="translate(0 569.6) scale(0.94203 0.75)" x="317.4" y="0" fill="#8c8cb4">=</text>
<text transform="translate(0 569.6) scale(0.94203 0.75)" x="422.49" y="0" fill="#8c8cb4">=</text>
<text transform="translate(0 569.6) scale(0.94203 0.75)" x="527.58" y="0" fill="#8c8cb4">=</text>
<text transform="translate(0 569.6) scale(0.94203 0.75)" x="632.68" y="0" fill="#8c8cb4">=</text>
<text transform="translate(0 569.6) scale(0.94203 0.75)" x="737.77" y="0" fill="#8c8cb4">=</text>
<text transform="translate(0 569.6) scale(0.94203 0.75)" x="842.86" y="0" fill="#8c8cb4">=</text>
<text transform="translate(0 569.6) scale(0.94203 0.75)" x="947.95" y="0" fill="#8c8cb4">=</text>
<clipPath id="one"><polygon points="549,454 553,454 553,464 551,464 551,460 549,460"/></clipPath>
<g clip-path="url(#one)"><text transform="translate(547.6 464) scale(1.114 1)" font-size="13.1" font-weight="bold" fill="#e6860f" fill-opacity="0.82">1</text></g>
<rect x="552" y="511" width="1" height="14" fill="#e6860f"/>
<rect x="552" y="526" width="1" height="14" fill="#e6860f"/>
<text transform="translate(0 600) scale(0.94203 1)" x="468.14 477.69 485.12 492.55 499.98 507.42 511.66 514.85 522.28 529.71 533.95 543.51 546.69 554.12 565.8 573.23 580.66 584.91 592.34 596.58 604.02 611.45 615.69 625.25 632.68 640.11 647.54 654.97 659.22 670.89 678.32 685.75 693.18 700.62" y="0" fill="#000">Repeating Elements by RepeatMasker</text>
<text transform="translate(0 614) scale(0.94203 1)" x="72.18 81.74 89.17 96.6 104.03 111.46 115.71 127.38 134.82 142.25 149.68 157.11" y="0" fill="#000">RepeatMasker</text>
</svg>
</body></html>
